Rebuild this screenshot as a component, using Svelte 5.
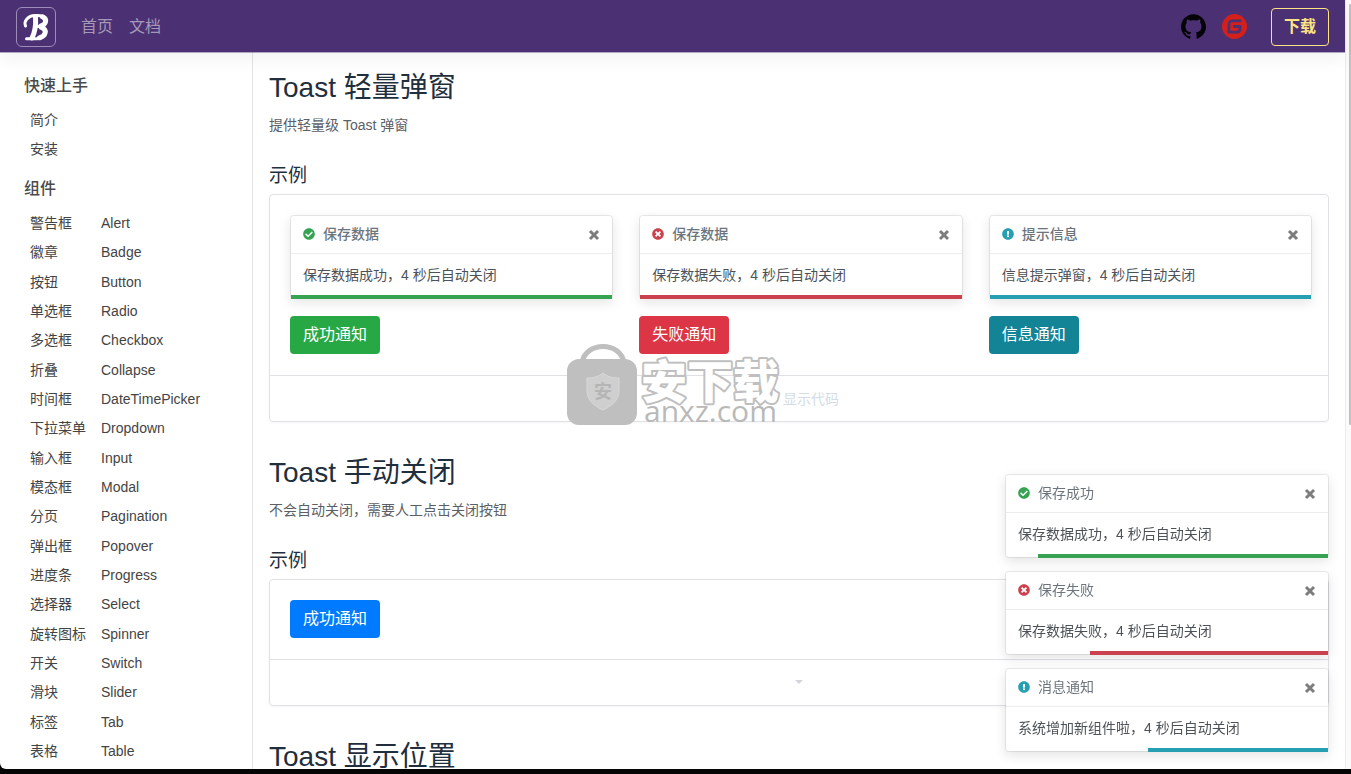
<script>
  const guides = ['简介', '安装'];

  const components = [
    ['警告框', 'Alert'],
    ['徽章', 'Badge'],
    ['按钮', 'Button'],
    ['单选框', 'Radio'],
    ['多选框', 'Checkbox'],
    ['折叠', 'Collapse'],
    ['时间框', 'DateTimePicker'],
    ['下拉菜单', 'Dropdown'],
    ['输入框', 'Input'],
    ['模态框', 'Modal'],
    ['分页', 'Pagination'],
    ['弹出框', 'Popover'],
    ['进度条', 'Progress'],
    ['选择器', 'Select'],
    ['旋转图标', 'Spinner'],
    ['开关', 'Switch'],
    ['滑块', 'Slider'],
    ['标签', 'Tab'],
    ['表格', 'Table']
  ];

  const samples = [
    { kind: 'success', title: '保存数据', text: '保存数据成功，4 秒后自动关闭', left: 100, button: '成功通知' },
    { kind: 'danger', title: '保存数据', text: '保存数据失败，4 秒后自动关闭', left: 100, button: '失败通知' },
    { kind: 'info', title: '提示信息', text: '信息提示弹窗，4 秒后自动关闭', left: 100, button: '信息通知' }
  ];

  let live = $state([
    { kind: 'success', title: '保存成功', text: '保存数据成功，4 秒后自动关闭', left: 90 },
    { kind: 'danger', title: '保存失败', text: '保存数据失败，4 秒后自动关闭', left: 74 },
    { kind: 'info', title: '消息通知', text: '系统增加新组件啦，4 秒后自动关闭', left: 56 }
  ]);

  const icons = {
    success:
      'M504 256c0 136.967-111.033 248-248 248S8 392.967 8 256 119.033 8 256 8s248 111.033 248 248zM227.314 387.314l184-184c6.248-6.248 6.248-16.379 0-22.627l-22.627-22.627c-6.248-6.249-16.379-6.249-22.628 0L216 308.118l-70.059-70.059c-6.248-6.248-16.379-6.248-22.628 0l-22.627 22.627c-6.248 6.248-6.248 16.379 0 22.627l104 104c6.249 6.249 16.379 6.249 22.628.001z',
    danger:
      'M256 8C119 8 8 119 8 256s111 248 248 248 248-111 248-248S393 8 256 8zm121.6 313.100c4.700 4.700 4.700 12.300 0 17L338 377.600c-4.700 4.700-12.300 4.700-17 0L256 312l-65.100 65.600c-4.700 4.700-12.300 4.700-17 0L134.400 338c-4.700-4.700-4.700-12.300 0-17l65.600-65-65.600-65.100c-4.700-4.700-4.700-12.300 0-17l39.600-39.600c4.700-4.700 12.300-4.700 17 0l65 65.700 65.100-65.600c4.700-4.700 12.300-4.700 17 0l39.600 39.600c4.700 4.700 4.700 12.300 0 17L312 256l65.600 65.100z',
    info:
      'M504 256c0 136.997-111.043 248-248 248S8 392.997 8 256C8 119.083 119.043 8 256 8s248 111.083 248 248zm-248 50c-25.405 0-46 20.595-46 46s20.595 46 46 46 46-20.595 46-46-20.595-46-46-46zm-43.673-165.346l7.418 136c.347 6.364 5.609 11.346 11.982 11.346h48.546c6.373 0 11.635-4.982 11.982-11.346l7.418-136c.375-6.874-5.098-12.654-11.982-12.654h-63.383c-6.884 0-12.356 5.780-11.981 12.654z'
  };

  function dismiss(item) {
    live = live.filter((entry) => entry !== item);
  }
</script>

{#snippet toast(item, close)}
  <div class="toast {item.kind}" role="alert">
    <div class="toast-head">
      <svg class="state" viewBox="0 0 512 512" aria-hidden="true"><path d={icons[item.kind]} /></svg>
      <strong>{item.title}</strong>
      <button class="close" type="button" aria-label="关闭" onclick={close}>
        <svg viewBox="0 0 12 12" aria-hidden="true"><path d="M2 2 L10 10 M10 2 L2 10" /></svg>
      </button>
    </div>
    <div class="toast-body">{item.text}</div>
    <div class="progress"><div class="bar" style="width: {item.left}%"></div></div>
  </div>
{/snippet}

<div class="window">
  <div class="page">
    <header>
      <a class="brand" href="#top" aria-label="Bootstrap Blazor">
        <svg viewBox="0 0 38 38" aria-hidden="true">
          <path class="thick" d="M18.500 9.500 C19 16 17.500 25 15 30" />
          <path class="mid" d="M8.500 18 C6.500 13 11 7.800 18 7.500 C23 7.200 26.500 7.800 28 9.500" />
          <path class="thick" d="M25.500 8.800 C30.500 11 29 16.500 24 17.800" />
          <path class="mid" d="M25 18.400 L20 18.600" />
          <path class="thick" d="M24.500 19.500 C30.500 21.500 29 28 22.500 29.800" />
          <path class="mid" d="M9.500 30.800 H18 C21 30.900 22.500 30.800 24 30" />
        </svg>
      </a>
      <nav>
        <a href="#home">首页</a>
        <a href="#docs">文档</a>
      </nav>
      <div class="tools">
        <a class="repo" href="#github" aria-label="GitHub">
          <svg viewBox="0 0 24 24" aria-hidden="true">
            <path fill="#050308" d="M12 .297c-6.630 0-12 5.373-12 12 0 5.303 3.438 9.800 8.205 11.385.6.113.82-.258.82-.577 0-.285-.01-1.040-.015-2.040-3.338.724-4.042-1.610-4.042-1.610C4.422 18.070 3.633 17.700 3.633 17.700c-1.087-.744.084-.729.084-.729 1.205.084 1.838 1.236 1.838 1.236 1.070 1.835 2.809 1.305 3.495.998.108-.776.417-1.305.76-1.605-2.665-.3-5.466-1.332-5.466-5.930 0-1.310.465-2.380 1.235-3.220-.135-.303-.54-1.523.105-3.176 0 0 1.005-.322 3.300 1.230.96-.267 1.980-.399 3-.405 1.020.006 2.040.138 3 .405 2.280-1.552 3.285-1.230 3.285-1.230.645 1.653.24 2.873.12 3.176.765.840 1.230 1.910 1.230 3.220 0 4.610-2.805 5.625-5.475 5.920.42.360.81 1.096.81 2.220 0 1.606-.015 2.896-.015 3.286 0 .315.210.690.825.570C20.565 22.092 24 17.592 24 12.297c0-6.627-5.373-12-12-12" />
          </svg>
        </a>
        <a class="repo" href="#gitee" aria-label="Gitee">
          <svg viewBox="0 0 24 24" aria-hidden="true">
            <path fill="#d3201b" d="M11.984 0A12 12 0 0 0 0 12a12 12 0 0 0 12 12 12 12 0 0 0 12-12A12 12 0 0 0 12 0a12 12 0 0 0-.016 0zm6.090 5.333c.328 0 .593.266.592.593v1.482a.594.594 0 0 1-.593.592H9.777c-.982 0-1.778.796-1.778 1.778v5.630c0 .327.266.592.593.592h5.630c.982 0 1.778-.796 1.778-1.778v-.296a.593.593 0 0 0-.592-.593h-4.150a.592.592 0 0 1-.592-.592v-1.482a.593.593 0 0 1 .593-.592h6.815c.327 0 .593.265.593.592v3.408a4 4 0 0 1-4 4H5.926a.593.593 0 0 1-.593-.593V9.778a4.444 4.444 0 0 1 4.445-4.444h8.296z" />
          </svg>
        </a>
        <a class="download" href="#download">下载</a>
      </div>
    </header>

    <div class="columns">
      <aside>
        <h4>快速上手</h4>
        <ul>
          {#each guides as name}
            <li><a href="#{name}">{name}</a></li>
          {/each}
        </ul>
        <h4>组件</h4>
        <ul class="fill">
          {#each components as [name, english]}
            <li><a href="#{english}"><span>{name}</span><span>{english}</span></a></li>
          {/each}
        </ul>
      </aside>

      <main>
        <section>
          <h2>Toast 轻量弹窗</h2>
          <p>提供轻量级 Toast 弹窗</p>
          <h3>示例</h3>
          <div class="card">
            <div class="demo">
              {#each samples as item}
                <div class="sample">
                  {@render toast(item)}
                  <button class="btn {item.kind}" type="button">{item.button}</button>
                </div>
              {/each}
            </div>
            <button class="code" type="button"><i></i><span>显示代码</span></button>
            <div class="watermark" aria-hidden="true">
              <svg viewBox="0 0 216 80">
                <path class="handle" d="M15 18 C18 -4 54 -4 57 18" />
                <rect class="bag" x="0" y="14" width="70" height="66" rx="12" />
                <path class="shield" d="M36 28 C31 32 26 33 20 33 V46 C20 55 27 61 36 65 C45 61 52 55 52 46 V33 C46 33 41 32 36 28 Z" />
                <text class="seal" x="27" y="53">安</text>
                <text class="name" x="74" y="53">安下载</text>
                <text class="site" x="77" y="77">anxz.com</text>
              </svg>
            </div>
          </div>
        </section>

        <section>
          <h2>Toast 手动关闭</h2>
          <p>不会自动关闭，需要人工点击关闭按钮</p>
          <h3>示例</h3>
          <div class="card">
            <div class="demo"><button class="btn primary" type="button">成功通知</button></div>
            <button class="code" type="button" aria-label="显示代码"><i></i></button>
          </div>
        </section>

        <section>
          <h2>Toast 显示位置</h2>
        </section>
      </main>
    </div>
  </div>
  <div class="track"><div class="thumb"></div></div>

  <div class="stack">
    {#each live as item}
      {@render toast(item, () => dismiss(item))}
    {/each}
  </div>
</div>

<style>
  :global(body) {
    background: #050505;
    color: #4d5258;
    font: 14px/21px 'Liberation Sans', 'Noto Sans CJK SC', sans-serif;
  }

  * {
    box-sizing: border-box;
  }

  a {
    color: inherit;
    text-decoration: none;
  }

  button {
    font-family: inherit;
    cursor: pointer;
  }

  .window {
    display: flex;
    height: calc(100vh - 5px);
    overflow: hidden;
    background: #fff;
    border-bottom-left-radius: 6px;
  }

  .page {
    flex: 1;
    min-width: 0;
    display: flex;
    flex-direction: column;
  }

  header {
    position: relative;
    z-index: 1;
    flex: none;
    display: flex;
    align-items: center;
    height: 52px;
    padding: 1px 16px 0;
    background: #4b3173;
    box-shadow: 0 8px 16px rgba(0, 0, 0, 0.05), 0 1px 0 rgba(75, 49, 115, 0.4);
  }

  .brand {
    width: 40px;
    height: 40px;
    border: 1px solid #9d8cb8;
    border-radius: 6px;
  }

  .brand svg {
    display: block;
    width: 100%;
    fill: none;
    stroke: #fff;
    stroke-linecap: round;
  }

  .thick {
    stroke-width: 5;
  }

  .mid {
    stroke-width: 3;
  }

  nav {
    display: flex;
    gap: 16px;
    margin-left: 25px;
    color: #a598b9;
    font-size: 16px;
    line-height: 24px;
  }

  .tools {
    display: flex;
    align-items: center;
    gap: 16px;
    margin-left: auto;
  }

  .repo svg {
    display: block;
    width: 25px;
    height: 25px;
  }

  .download {
    margin-left: 8px;
    padding: 6px 12px;
    border: 1px solid #ffe484;
    border-radius: 4px;
    color: #ffe484;
    font-size: 16px;
    font-weight: 700;
    line-height: 24px;
  }

  .columns {
    flex: 1;
    min-height: 0;
    display: flex;
  }

  aside {
    flex: none;
    display: flex;
    flex-direction: column;
    width: 253px;
    padding: 22px 24px 3px;
    border-right: 1px solid #e4e4e6;
    color: #444;
  }

  h4 {
    margin: 0 0 8px;
    color: #4a4a4a;
    font-size: 16px;
    font-weight: 500;
    line-height: 24px;
  }

  ul {
    display: grid;
    grid-auto-rows: 29px;
    margin: 0 0 13px;
    padding: 0 0 0 6px;
    list-style: none;
  }

  ul.fill {
    flex: 1;
    grid-auto-rows: minmax(29px, 1fr);
    margin: 0;
  }

  li a {
    display: grid;
    grid-template-columns: 71px 1fr;
    align-items: center;
    height: 100%;
  }

  main {
    flex: 1;
    min-width: 0;
    padding: 19px 16px 0;
    overflow: hidden;
  }

  section {
    margin-bottom: 34px;
  }

  h2,
  h3 {
    margin: 0;
    color: #1f2f3d;
    font-size: 28px;
    font-weight: 400;
    line-height: 34px;
  }

  h3 {
    margin-bottom: 6px;
    font-size: 19px;
    line-height: 24px;
  }

  p {
    margin: 10px 0 28px;
    color: #5b6067;
  }

  .card {
    position: relative;
    border: 1px solid #dfe1e5;
    border-radius: 4px;
    box-shadow: 0 1px 3px rgba(0, 0, 0, 0.04);
  }

  .demo {
    display: flex;
    gap: 26px;
    padding: 20px 16px 21px 20px;
  }

  .sample {
    flex: 1;
  }

  .sample .toast {
    margin-bottom: 17px;
  }

  .success {
    --tone: #28a745;
    --bar: #35a351;
  }

  .danger {
    --tone: #dc3545;
    --bar: #cb414e;
  }

  .info {
    --tone: #138496;
    --bar: #259fb1;
  }

  .primary {
    --tone: #007bff;
  }

  .btn {
    height: 38px;
    padding: 0 13px;
    border: 0;
    border-radius: 4px;
    background: var(--tone);
    color: #fff;
    font-size: 16px;
    line-height: 24px;
  }

  .code {
    display: flex;
    align-items: center;
    justify-content: center;
    gap: 16px;
    width: 100%;
    height: 46px;
    padding: 0 0 2px;
    border: 0;
    border-top: 1px solid #dfe1e5;
    background: none;
    color: #d3dce6;
    font-size: 14px;
  }

  .code i {
    border: 4px solid transparent;
    border-top-color: #d3d7dc;
    border-bottom: 0;
  }

  .toast {
    border: 1px solid rgba(0, 0, 0, 0.08);
    border-radius: 4px;
    background: #fff;
    background-clip: padding-box;
    box-shadow: 0 4px 12px rgba(0, 0, 0, 0.1);
  }

  .toast-head {
    display: flex;
    align-items: center;
    gap: 8px;
    height: 38px;
    padding: 0 12px;
    border-bottom: 1px solid #ededee;
    color: #6c757d;
  }

  .toast-head strong {
    flex: 1;
    font-weight: 500;
  }

  .state {
    width: 12px;
    height: 12px;
    margin-bottom: 2px;
    fill: var(--bar);
  }

  .close {
    width: 12px;
    height: 12px;
    padding: 0;
    border: 0;
    background: none;
  }

  .close svg {
    display: block;
    stroke: #7d7d7d;
    stroke-width: 3;
  }

  .toast-body {
    padding: 11px 12px 9px;
  }

  .progress {
    display: flex;
    justify-content: flex-end;
    height: 4px;
    margin-bottom: -1px;
  }

  .bar {
    background: var(--bar);
  }

  .stack {
    position: fixed;
    right: 22px;
    bottom: 22px;
    z-index: 2;
    display: grid;
    gap: 13px;
    width: 324px;
  }

  .stack strong {
    font-weight: 400;
  }

  .track {
    flex: none;
    display: flex;
    justify-content: flex-end;
    width: 6px;
    padding-top: 4px;
    border-left: 1px solid #ececec;
    background: #fafafa;
  }

  .thumb {
    width: 2px;
    height: 55%;
    border-radius: 2px;
    background: #c1c1c1;
  }

  .watermark {
    position: absolute;
    left: 297px;
    bottom: -4px;
    width: 216px;
    pointer-events: none;
  }

  .watermark svg {
    display: block;
    overflow: visible;
  }

  .handle {
    fill: none;
    stroke: #bfbfbf;
    stroke-width: 5;
  }

  .bag {
    fill: #bfbfbf;
  }

  .shield {
    fill: #cfcfcf;
    stroke: #d9d9d9;
  }

  .seal {
    fill: #b5b5b5;
    font-size: 18px;
    font-weight: 700;
  }

  .name {
    fill: #fff;
    stroke: #bfbfbf;
    stroke-width: 4;
    stroke-linejoin: round;
    paint-order: stroke;
    font-size: 46px;
    font-weight: 900;
  }

  .site {
    fill: #b9b9b9;
    font-family: 'Open Sans', sans-serif;
    font-size: 30px;
    font-weight: 500;
  }
</style>
